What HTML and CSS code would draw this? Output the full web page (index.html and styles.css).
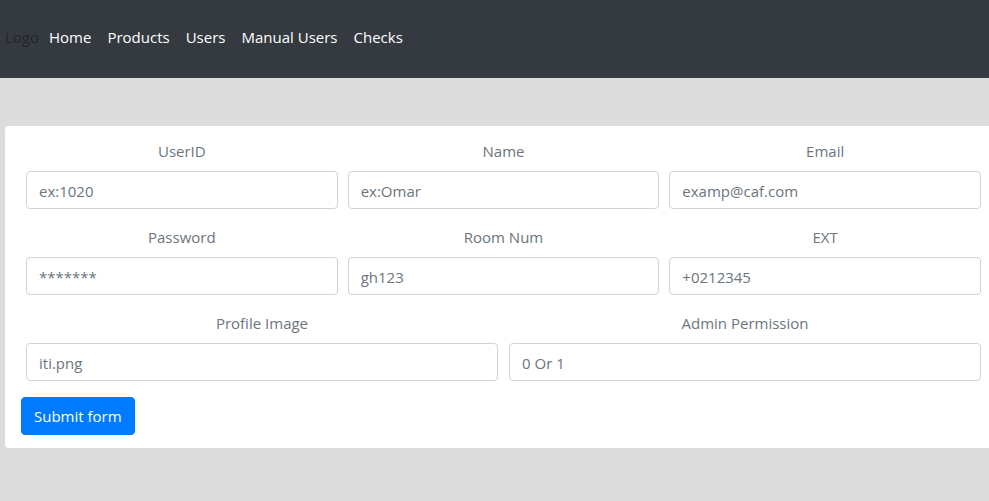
FILE: index.html
```html
<!DOCTYPE html>
<html>
<head>
<meta charset="utf-8">
<link rel="stylesheet" href="styles.css">
</head>
<body>
<nav class="navbar">
  <span class="logo">Logo</span>
  <a class="nav-link" href="#">Home</a>
  <a class="nav-link" href="#">Products</a>
  <a class="nav-link" href="#">Users</a>
  <a class="nav-link" href="#">Manual Users</a>
  <a class="nav-link" href="#">Checks</a>
</nav>
<main class="main">
  <form class="card">
    <div class="row row-3">
      <div class="group"><label class="label">UserID</label><input class="input" placeholder="ex:1020"></div>
      <div class="group"><label class="label">Name</label><input class="input" placeholder="ex:Omar"></div>
      <div class="group"><label class="label">Email</label><input class="input" placeholder="examp@caf.com"></div>
    </div>
    <div class="row row-3">
      <div class="group"><label class="label">Password</label><input class="input" placeholder="*******"></div>
      <div class="group"><label class="label">Room Num</label><input class="input" placeholder="gh123"></div>
      <div class="group"><label class="label">EXT</label><input class="input" placeholder="+0212345"></div>
    </div>
    <div class="row row-2">
      <div class="group"><label class="label">Profile Image</label><input class="input" placeholder="iti.png"></div>
      <div class="group"><label class="label">Admin Permission</label><input class="input" placeholder="0 Or 1"></div>
    </div>
    <button class="btn" type="button">Submit form</button>
  </form>
</main>
</body>
</html>
```
FILE: styles.css
```css
* { box-sizing: border-box; }
html, body { margin: 0; padding: 0; }
body {
  background: #dcdcdc;
  font-family: "Open Sans", "Noto Sans", sans-serif;
  font-size: 15px;
  line-height: 24px;
  color: #212529;
  overflow: hidden;
  height: 501px;
}
.navbar {
  height: 78px;
  background: #343a40;
  display: flex;
  align-items: center;
  padding: 0 0 4px 5px;
}
.logo { color: #212529; margin-right: 1px; }
.nav-link {
  color: #ffffff;
  text-decoration: none;
  padding: 0 8px;
}
.nav-link:first-of-type { padding-left: 9px; }
.main { padding-top: 48px; }
.card {
  margin: 0 0 0 5px;
  background: #ffffff;
  border-radius: 4px 0 0 4px;
  padding: 13px 8px 13px 21px;
}
.row {
  display: grid;
  column-gap: 10px;
}
.row-3 { grid-template-columns: 1fr 1fr 1fr; }
.row-2 { grid-template-columns: 1fr 1fr; column-gap: 11px; }
.group {
  display: flex;
  flex-direction: column;
  margin-bottom: 16px;
}
.label {
  text-align: center;
  color: #6c757d;
  margin-bottom: 8px;
  line-height: 24px;
}
.input {
  height: 38px;
  border: 1px solid #ced4da;
  border-radius: 4px;
  padding: 7px 12px 5px;
  font: inherit;
  color: #495057;
  background: #fff;
}
.input::placeholder { color: #6c757d; opacity: 1; }
.btn {
  margin-left: -5px;
  height: 38px;
  padding: 6px 12px;
  background: #007bff;
  border: 1px solid #007bff;
  border-radius: 4px;
  color: #fff;
  font: inherit;
  display: block;
}
```
